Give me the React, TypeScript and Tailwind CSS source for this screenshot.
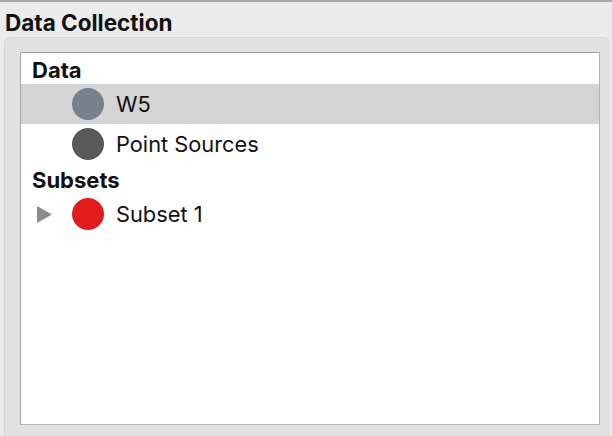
import React from "react";

function Row({
  color,
  label,
  selected,
  expander,
}: {
  color: string;
  label: string;
  selected?: boolean;
  expander?: boolean;
}) {
  return (
    <div
      className={`flex items-center h-[40px] ${selected ? "bg-[#d4d4d4]" : ""}`}
    >
      <div className="w-[51px] flex items-center pl-[16px]">
        {expander && (
          <svg width="15" height="17" viewBox="0 0 15 17">
            <polygon points="0,0 15,8.5 0,17" fill="#8b8b8b" />
          </svg>
        )}
      </div>
      <div
        className="w-[32px] h-[32px] rounded-full"
        style={{ backgroundColor: color }}
      />
      <span className="ml-[12px] pt-[1px] text-[21.8px] text-[#111] leading-none">{label}</span>
    </div>
  );
}

export default function App() {
  return (
    <div
      className="w-[612px] h-[436px] overflow-hidden bg-[#ececec] border-t-2 border-[#aaaaaa] flex flex-col"
      style={{ fontFamily: "Inter, 'Liberation Sans', sans-serif" }}
    >
      <div className="h-[35px] flex items-center pl-[5px] pt-[8px] text-[22.5px] font-bold text-[#111] shrink-0 leading-none">
        Data Collection
      </div>
      <div className="flex-1 ml-[4px] mr-[2px] rounded-t-[6px] bg-[#e2e2e2] border-t border-l border-[#d6d6d6] pt-[14px] pl-[15px] pr-[10px] pb-[11px] flex flex-col">
        <div className="flex-1 bg-white border border-t-[#9d9d9d] border-l-[#a5a5a5] border-r-[#b5b5b5] border-b-[#b5b5b5] flex flex-col">
          <div className="h-[31px] flex items-center pl-[11px] pt-[3px] text-[22px] font-bold text-[#111] leading-none">
            Data
          </div>
          <Row color="#75808c" label="W5" selected />
          <Row color="#5a5a5a" label="Point Sources" />
          <div className="h-[30px] flex items-center pl-[11px] pt-[1px] text-[22px] font-bold text-[#111] leading-none">
            Subsets
          </div>
          <Row color="#e31b1c" label="Subset 1" expander />
        </div>
      </div>
    </div>
  );
}
